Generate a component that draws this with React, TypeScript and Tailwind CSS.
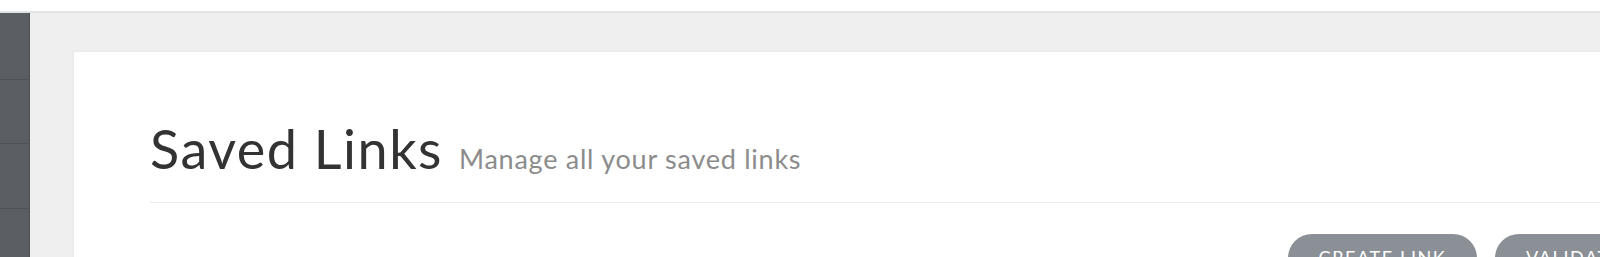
import React from 'react';

const SIDEBAR_ITEMS = 5;

export default function App() {
  return (
    <div className="h-[257px] w-[1600px] overflow-hidden bg-white" style={{ fontFamily: 'Lato, "Open Sans", sans-serif' }}>
      {/* top bar */}
      <div className="h-[13px] bg-white border-b-2 border-[#e3e3e3]" />
      <div className="flex h-full bg-[#efefef]">
        {/* sidebar */}
        <div className="w-[30px] shrink-0 bg-[#5b5f64] border-r border-[#4a4e52] flex flex-col pt-[2px]">
          {Array.from({ length: SIDEBAR_ITEMS }).map((_, i) => (
            <div key={i} className="h-[64.5px] shrink-0 border-b border-[#4f5358]" />
          ))}
        </div>
        {/* content */}
        <div className="flex-1 pl-[44px] pt-[39px]">
          <div className="bg-white w-[1560px] h-[400px] shadow-[0_0_2px_rgba(0,0,0,0.06)] pl-[76px] pt-[70px]">
            <div className="flex items-baseline gap-[16px] pb-[22px] border-b border-[#ececec]">
              <h1 className="text-[54px] leading-[54px] text-[#333333] font-normal tracking-[1.5px]">Saved Links</h1>
              <span className="text-[27px] text-[#8c8c8c] tracking-[0.75px]">Manage all your saved links</span>
            </div>
            <div className="flex gap-[18px] pt-[31px] pl-[1138px]">
              <button className="h-[48px] w-[189px] shrink-0 rounded-full bg-[#8a9096] text-white text-[18px] tracking-[1.6px] text-center">CREATE LINK</button>
              <button className="h-[48px] w-[160px] shrink-0 rounded-full bg-[#8a9096] text-white text-[18px] tracking-[1.6px] text-left pl-[31px]">VALIDATE</button>
            </div>
          </div>
        </div>
      </div>
    </div>
  );
}
